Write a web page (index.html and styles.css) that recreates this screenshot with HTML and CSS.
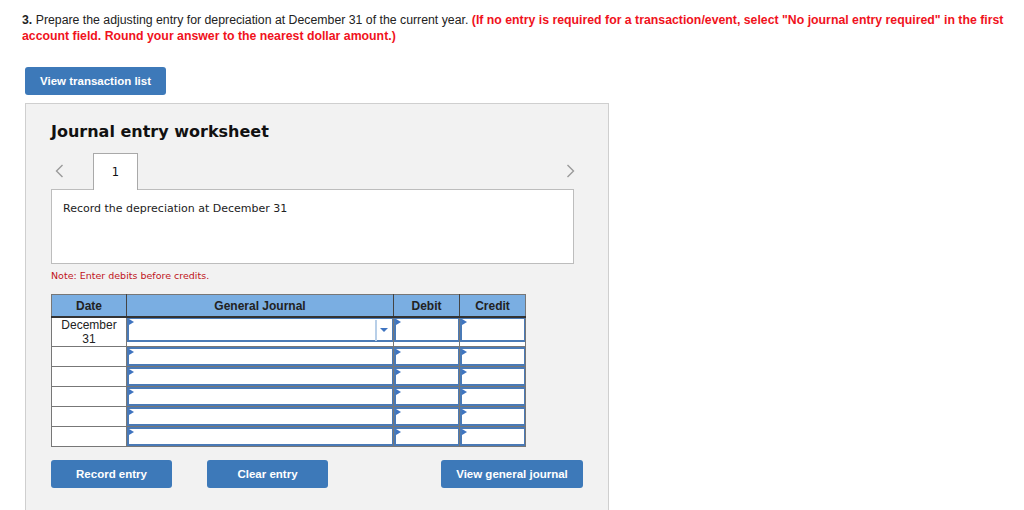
FILE: index.html
```html
<!DOCTYPE html>
<html>
<head>
<meta charset="utf-8">
<link rel="stylesheet" href="styles.css">
</head>
<body>
<div class="page">
  <p class="question"><b>3.</b> Prepare the adjusting entry for depreciation at December 31 of the current year. <span class="warn">(If no entry is required for a transaction/event, select "No journal entry required" in the first</span> <span class="warn">account field. Round your answer to the nearest dollar amount.)</span></p>
  <button class="btn btn-list">View transaction list</button>
  <section class="panel">
    <h2 class="title">Journal entry worksheet</h2>
    <div class="tabs">
      <svg class="arrow" width="9" height="14" viewBox="0 0 9 14"><path d="M7.5 1 L1.5 7 L7.5 13" fill="none" stroke="#9a9a9a" stroke-width="1.4"/></svg>
      <div class="tab">1</div>
      <svg class="arrow arrow-right" width="9" height="14" viewBox="0 0 9 14"><path d="M1.5 1 L7.5 7 L1.5 13" fill="none" stroke="#9a9a9a" stroke-width="1.4"/></svg>
    </div>
    <div class="desc">Record the depreciation at December 31</div>
    <p class="note">Note: Enter debits before credits.</p>
    <table class="journal">
      <thead>
        <tr><th class="c-date">Date</th><th class="c-gj">General Journal</th><th class="c-amt">Debit</th><th class="c-amt">Credit</th></tr>
      </thead>
      <tbody>
        <tr class="first">
          <td class="date">December<br>31</td>
          <td><div class="field"><span class="select-bar"></span><span class="caret"></span></div></td>
          <td><div class="field"></div></td>
          <td><div class="field"></div></td>
        </tr>
        <tr><td class="date"></td><td><div class="field"></div></td><td><div class="field"></div></td><td><div class="field"></div></td></tr>
        <tr><td class="date"></td><td><div class="field"></div></td><td><div class="field"></div></td><td><div class="field"></div></td></tr>
        <tr><td class="date"></td><td><div class="field"></div></td><td><div class="field"></div></td><td><div class="field"></div></td></tr>
        <tr><td class="date"></td><td><div class="field"></div></td><td><div class="field"></div></td><td><div class="field"></div></td></tr>
        <tr><td class="date"></td><td><div class="field"></div></td><td><div class="field"></div></td><td><div class="field"></div></td></tr>
      </tbody>
    </table>
    <div class="actions">
      <button class="btn btn-record">Record entry</button>
      <button class="btn btn-clear">Clear entry</button>
      <button class="btn btn-view">View general journal</button>
    </div>
  </section>
</div>
</body>
</html>
```
FILE: styles.css
```css
html, body {
  margin: 0;
  padding: 0;
  background: #ffffff;
}
.page {
  padding: 12px 0 0 22px;
  width: 995px;
  font-family: "Liberation Sans", Arial, sans-serif;
}
.question {
  margin: 0;
  font-size: 12.3px;
  line-height: 16px;
  color: #222;
}
.question b {
  font-weight: bold;
}
.warn {
  color: #f0121c;
  font-weight: bold;
}
.btn {
  display: flex;
  align-items: center;
  justify-content: center;
  height: 28px;
  border: 0;
  border-radius: 3px;
  background: #3d79b9;
  color: #fff;
  font-family: "Liberation Sans", Arial, sans-serif;
  font-weight: bold;
  font-size: 11.5px;
  padding: 0;
  cursor: pointer;
}
.btn-list {
  margin: 23px 0 0 3px;
  width: 141px;
}
.panel {
  margin: 8px 0 0 3px;
  width: 584px;
  height: 420px;
  background: #f2f2f2;
  border: 1px solid #cfcfcf;
  padding: 0 0 0 25px;
  box-sizing: border-box;
}
.title {
  margin: 0;
  padding-top: 17px;
  font-family: "DejaVu Sans", Verdana, sans-serif;
  font-weight: bold;
  font-size: 16px;
  line-height: 22px;
  color: #111;
}
.tabs {
  display: flex;
  align-items: center;
  width: 523px;
  height: 37px;
  margin-top: 9px;
}
.arrow {
  margin-left: 4px;
}
.tab {
  margin-left: 29px;
  width: 43px;
  height: 36px;
  border: 1px solid #a9a9a9;
  border-bottom: 0;
  background: #fff;
  align-self: flex-end;
  display: flex;
  align-items: center;
  justify-content: center;
  font-family: "DejaVu Sans", Verdana, sans-serif;
  font-size: 11.5px;
  color: #111;
  position: relative;
  z-index: 1;
  box-sizing: content-box;
  margin-bottom: -1px;
}
.arrow-right {
  margin-left: auto;
  margin-right: -1px;
}
.desc {
  width: 523px;
  height: 75px;
  box-sizing: border-box;
  background: #fff;
  border: 1px solid #bdbdbd;
  padding: 11px 0 0 11px;
  font-family: "DejaVu Sans", Verdana, sans-serif;
  font-size: 11px;
  line-height: 16px;
  color: #222;
}
.note {
  margin: 5px 0 0 0;
  font-family: "DejaVu Sans", Verdana, sans-serif;
  font-size: 9.5px;
  line-height: 14px;
  color: #c0141b;
}
.journal {
  margin-top: 11px;
  border-collapse: collapse;
  border: 1px solid #777;
  background: #fff;
  font-family: "Liberation Sans", Arial, sans-serif;
  font-size: 12px;
}
.journal th {
  background: #7aaee2;
  color: #222;
  font-weight: bold;
  height: 21px;
  padding: 0;
  border: 1px solid #444;
  border-bottom: 2px solid #333;
  border-top-color: #777;
}
.journal th.c-date { width: 74px; border-left-color: #777; }
.journal th.c-gj { width: 266px; }
.journal th.c-amt { width: 65px; }
.journal th:last-child { border-right-color: #777; }
.journal td {
  padding: 0;
  border: 1px solid #777;
  vertical-align: top;
}
.journal td.date {
  text-align: center;
  line-height: 14px;
  color: #222;
  font-size: 12px;
}
.field {
  position: relative;
  height: 15px;
  border: 2px solid #4a7ab6;
  border-right-width: 1.5px;
  background: #fff;
}
.first .field {
  height: 21px;
  border-top-width: 1px;
}
.field::before {
  content: "";
  position: absolute;
  left: 0;
  top: 0;
  border-top: 3px solid transparent;
  border-bottom: 3px solid transparent;
  border-left: 5px solid #3f74c0;
}
.select-bar {
  position: absolute;
  right: 15px;
  top: 1px;
  bottom: -1px;
  width: 2px;
  background: #b8cfe8;
}
.caret {
  position: absolute;
  right: 4px;
  top: 9px;
  border-left: 4px solid transparent;
  border-right: 4px solid transparent;
  border-top: 4px solid #3f74c0;
}
.actions {
  display: flex;
  margin-top: 13px;
}
.btn-record { width: 121px; }
.btn-clear { width: 121px; margin-left: 35px; }
.btn-view { width: 142px; margin-left: 113px; }
```
